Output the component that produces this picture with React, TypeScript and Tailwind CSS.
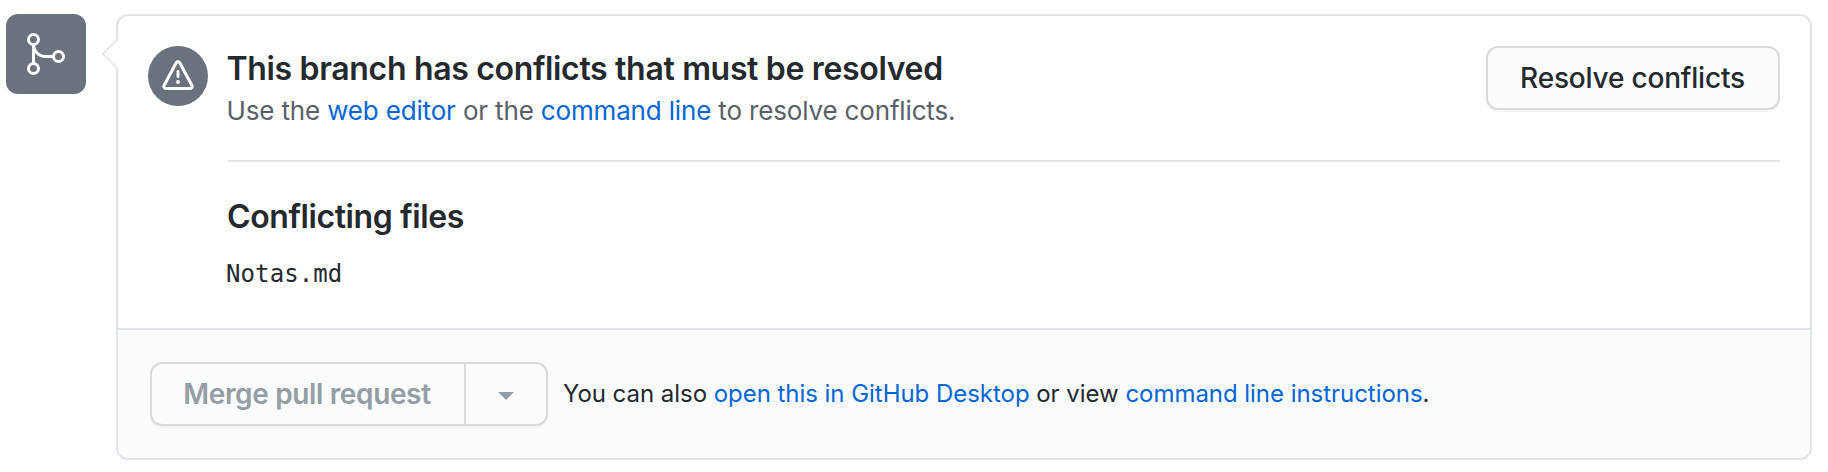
import type { ReactNode } from "react";

function GitMergeIcon() {
  return (
    <svg width="48" height="48" viewBox="0 0 24 24" fill="currentColor" className="block" aria-hidden="true">
      <path
        fillRule="evenodd"
        d="M5.75 21a1.75 1.75 0 1 1 0-3.5 1.75 1.75 0 0 1 0 3.5zM2.5 19.25a3.25 3.25 0 1 0 6.5 0 3.25 3.25 0 0 0-6.5 0zM5.75 6.5a1.75 1.75 0 1 1 0-3.5 1.75 1.75 0 0 1 0 3.5zM2.5 4.75a3.25 3.25 0 1 0 6.5 0 3.25 3.25 0 0 0-6.5 0zM18.25 15a1.75 1.75 0 1 1 0-3.5 1.75 1.75 0 0 1 0 3.5zM15 13.25a3.25 3.25 0 1 0 6.5 0 3.25 3.25 0 0 0-6.5 0z"
      />
      <path d="M6.5 7.25c0 2.9 2.35 5.25 5.25 5.25h4.5V14h-4.5A6.75 6.75 0 0 1 5 7.25h1.5z" />
      <path d="M5.75 16.75A.75.75 0 0 0 6.5 16V8A.75.75 0 0 0 5 8v8c0 .414.336.75.75.75z" />
    </svg>
  );
}

function AlertIcon() {
  return (
    <svg width="32" height="32" viewBox="0 0 16 16" fill="currentColor" className="block" aria-hidden="true">
      <path
        fillRule="evenodd"
        d="M8.22 1.754a.25.25 0 0 0-.44 0L1.698 13.132a.25.25 0 0 0 .22.368h12.164a.25.25 0 0 0 .22-.368L8.22 1.754zm-1.763-.707c.659-1.234 2.427-1.234 3.086 0l6.082 11.378A1.75 1.75 0 0 1 14.082 15H1.918a1.75 1.75 0 0 1-1.543-2.575L6.457 1.047zM9 11a1 1 0 1 1-2 0 1 1 0 0 1 2 0zm-.25-5.25a.75.75 0 0 0-1.5 0v2.5a.75.75 0 0 0 1.5 0v-2.5z"
      />
    </svg>
  );
}

function TextLink({ children }: { children: ReactNode }) {
  return (
    <a href="#" className="text-[#0366d6]">
      {children}
    </a>
  );
}

export default function App() {
  return (
    <main className="flex h-[472px] w-[1828px] items-start bg-white pt-[14px] pl-[6px] font-['Inter','Liberation_Sans',sans-serif] text-[#24292e]">
      <div className="flex h-20 w-20 shrink-0 items-center justify-center rounded-xl bg-[#6a737d] text-white">
        <GitMergeIcon />
      </div>

      <section className="relative ml-[30px] h-[446px] w-[1696px] rounded-xl border-2 border-[#e1e4e8] bg-white">
        <svg
          width="18"
          height="34"
          viewBox="0 0 18 34"
          className="absolute top-[21px] -left-4"
          aria-hidden="true"
        >
          <path d="M16 1.7L.7 17 16 32.3h2V1.7z" fill="#fff" />
          <path d="M15.5 2.2L.8 17l14.7 14.8" fill="none" stroke="#e1e4e8" strokeWidth="1.6" />
        </svg>

        <div className="flex h-[312px] items-start gap-5 px-[30px] pt-[30px]">
          <div className="flex h-[60px] w-[60px] shrink-0 items-center justify-center rounded-full bg-[#6a737d] text-white">
            <AlertIcon />
          </div>
          <div className="w-[1552px]">
            <div className="flex items-start justify-between border-b-2 border-[#e1e4e8] pb-[29px]">
              <div className="pt-px">
                <h3 className="-ml-[1.5px] text-[32px] leading-[44px] font-semibold tracking-[-0.33px]">
                  This branch has conflicts that must be resolved
                </h3>
                <p className="-ml-[1.5px] text-[26px] leading-[40px] tracking-[-0.16px] text-[#586069]">
                  Use the <TextLink>web editor</TextLink> or the <TextLink>command line</TextLink> to resolve conflicts.
                </p>
              </div>
              <button className="h-16 w-[294px] rounded-xl border-2 border-[#d9dadb] bg-[#fafbfc] pr-px text-[28px] font-medium tracking-[-0.19px] shadow-[0_2px_0_rgba(27,31,35,0.04)]">
                Resolve conflicts
              </button>
            </div>
            <h3 className="-ml-[1px] pt-[31px] text-[32px] leading-[48px] font-semibold tracking-[-0.4px]">
              Conflicting files
            </h3>
            <p className="mt-[15px] -ml-[2px] font-['DejaVu_Sans_Mono','Liberation_Mono',monospace] text-[24px] leading-[36px] tracking-[0.1px]">
              Notas.md
            </p>
          </div>
        </div>

        <div className="flex h-[130px] items-center rounded-b-[10px] border-t-2 border-[#e1e4e8] bg-[#fafbfc] pl-8">
          <div className="flex h-16 shrink-0 rounded-xl shadow-[0_2px_0_rgba(27,31,35,0.04)]">
            <button
              disabled
              className="w-[316px] rounded-l-xl border-2 border-[#d9dadb] bg-[#fafbfc] pr-[2px] text-[28px] font-semibold tracking-[-0.36px] text-[#959da5]"
            >
              Merge pull request
            </button>
            <button
              disabled
              aria-label="Select merge method"
              className="flex w-[82px] items-center justify-center rounded-r-xl border-2 border-l-0 border-[#d9dadb] bg-[#fafbfc] text-[#959da5]"
            >
              <svg width="16" height="8" viewBox="0 0 16 8" className="mt-1 block" aria-hidden="true">
                <path d="M0 0h16L8 8z" fill="currentColor" />
              </svg>
            </button>
          </div>
          <p className="ml-[15px] text-[24px] leading-[36px] tracking-[-0.04px]">
            You can also <TextLink>open this in GitHub Desktop</TextLink> or view{" "}
            <TextLink>command line instructions</TextLink>.
          </p>
        </div>
      </section>
    </main>
  );
}
